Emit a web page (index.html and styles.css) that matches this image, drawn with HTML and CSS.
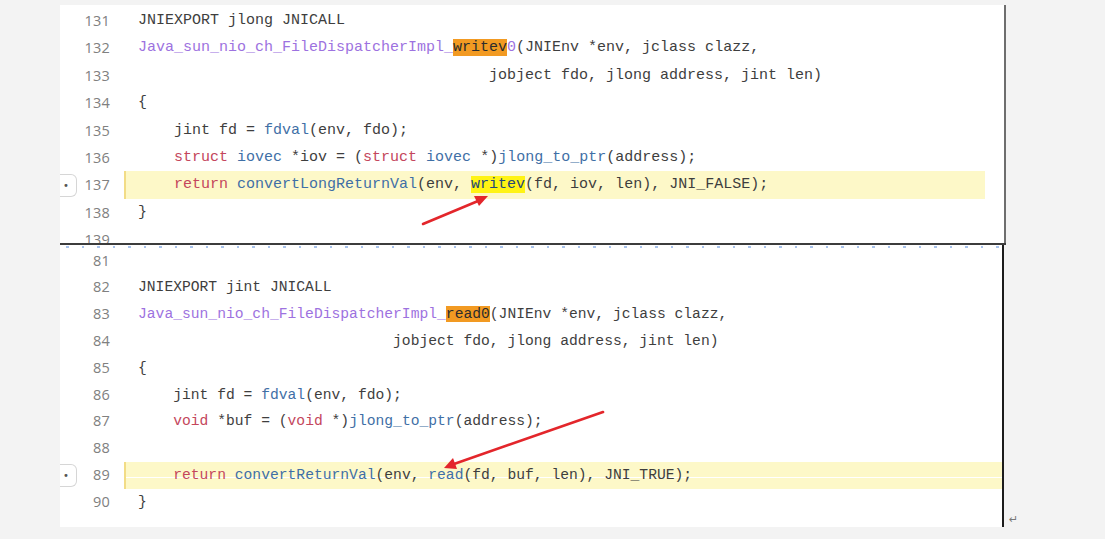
FILE: index.html
```html
<!DOCTYPE html>
<html>
<head>
<meta charset="utf-8">
<link rel="stylesheet" href="styles.css">
</head>
<body>
<div class="page">
  <div class="shot shot-top">
    <div class="row"><span class="gut"><span class="num">131</span></span><span class="code">JNIEXPORT jlong JNICALL</span></div>
    <div class="row"><span class="gut"><span class="num">132</span></span><span class="code"><span class="pu">Java_sun_nio_ch_FileDispatcherImpl_</span><span class="or">writev</span><span class="pu">0</span>(JNIEnv *env, jclass clazz,</span></div>
    <div class="row"><span class="gut"><span class="num">133</span></span><span class="code">                                       jobject fdo, jlong address, jint len)</span></div>
    <div class="row"><span class="gut"><span class="num">134</span></span><span class="code">{</span></div>
    <div class="row"><span class="gut"><span class="num">135</span></span><span class="code">    jint fd = <span class="bl">fdval</span>(env, fdo);</span></div>
    <div class="row"><span class="gut"><span class="num">136</span></span><span class="code">    <span class="kw">struct</span> <span class="bl">iovec</span> *iov = (<span class="kw">struct</span> <span class="bl">iovec</span> *)<span class="bl">jlong_to_ptr</span>(address);</span></div>
    <div class="row"><span class="gut"><span class="mark">•</span><span class="num">137</span></span><span class="code hl hl-top">    <span class="kw">return</span> <span class="bl">convertLongReturnVal</span>(env, <span class="ye">writev</span>(fd, iov, len), JNI_FALSE);</span></div>
    <div class="row"><span class="gut"><span class="num">138</span></span><span class="code">}</span></div>
    <div class="row"><span class="gut"><span class="num">139</span></span><span class="code"></span></div>
  </div>
  <div class="divider"></div>
  <div class="bottom-wrap">
    <div class="shot shot-bottom">
      <div class="row"><span class="gut"><span class="num">81</span></span><span class="code"></span></div>
      <div class="row"><span class="gut"><span class="num">82</span></span><span class="code">JNIEXPORT jint JNICALL</span></div>
      <div class="row"><span class="gut"><span class="num">83</span></span><span class="code"><span class="pu">Java_sun_nio_ch_FileDispatcherImpl_</span><span class="or">read0</span>(JNIEnv *env, jclass clazz,</span></div>
      <div class="row"><span class="gut"><span class="num">84</span></span><span class="code">                             jobject fdo, jlong address, jint len)</span></div>
      <div class="row"><span class="gut"><span class="num">85</span></span><span class="code">{</span></div>
      <div class="row"><span class="gut"><span class="num">86</span></span><span class="code">    jint fd = <span class="bl">fdval</span>(env, fdo);</span></div>
      <div class="row"><span class="gut"><span class="num">87</span></span><span class="code">    <span class="kw">void</span> *buf = (<span class="kw">void</span> *)<span class="bl">jlong_to_ptr</span>(address);</span></div>
      <div class="row"><span class="gut"><span class="num">88</span></span><span class="code"></span></div>
      <div class="row"><span class="gut"><span class="mark">•</span><span class="num">89</span></span><span class="code hl hl-bottom">    <span class="kw">return</span> <span class="bl">convertReturnVal</span>(env, <span class="bl">read</span>(fd, buf, len), JNI_TRUE);</span></div>
      <div class="row"><span class="gut"><span class="num">90</span></span><span class="code">}</span></div>
    </div>
    <span class="ret">↵</span>
  </div>
  <svg class="arrows" width="1105" height="539" viewBox="0 0 1105 539">
    <line x1="423" y1="224" x2="478" y2="201" stroke="#e3262b" stroke-width="2.6" stroke-linecap="round"/>
    <polygon points="488,196 474,196 479,206" fill="#e3262b"/>
    <line x1="603" y1="412" x2="454" y2="464" stroke="#e3262b" stroke-width="2.6" stroke-linecap="round"/>
    <polygon points="444,468 453,458 457,469" fill="#e3262b"/>
  </svg>
</div>
</body>
</html>
```
FILE: styles.css
```css
html, body {
  margin: 0;
  padding: 0;
}
body {
  background: #f3f3f3;
  width: 1105px;
  height: 539px;
  overflow: hidden;
}
.page {
  position: relative;
  padding: 5px 0 0 60px;
}
.shot {
  background: #ffffff;
  overflow: hidden;
}
.shot-top {
  width: 944px;
  height: 236px;
  padding-top: 2px;
  border-right: 2px solid #6e6e6e;
}
.shot-top .row {
  height: 27.4px;
  line-height: 27.4px;
  font-size: 15px;
}
.divider {
  width: 946px;
  height: 2px;
  background: #3c3c3c;
}
.bottom-wrap {
  display: flex;
  align-items: flex-end;
}
.shot-bottom {
  width: 942px;
  height: 279.4px;
  padding-top: 2.6px;
  border-right: 2px solid #1c1c1c;
  background-color: #fff;
  background-image: repeating-linear-gradient(90deg, transparent 0 6px, #a9c3ec 6px 9px, transparent 9px 22px, #a9c3ec 22px 24px, transparent 24px 31px);
  background-size: 100% 2px;
  background-position: 0 1px;
  background-repeat: no-repeat;
}
.shot-bottom .row {
  height: 26.8px;
  line-height: 26.8px;
  font-size: 14.67px;
}
.row {
  display: flex;
  align-items: stretch;
}
.gut {
  width: 64px;
  flex: none;
  display: flex;
  align-items: center;
  justify-content: flex-end;
  padding-right: 14px;
  box-sizing: border-box;
  position: relative;
}
.num {
  font-family: "Open Sans", "Noto Sans", sans-serif;
  font-size: 14.5px;
  color: #808080;
  letter-spacing: 0.2px;
}
.mark {
  position: absolute;
  left: 0;
  top: 50%;
  margin-top: -11px;
  width: 16px;
  height: 21px;
  border: 1px solid #d6d6d6;
  border-left: none;
  border-radius: 0 6px 6px 0;
  font-family: "DejaVu Sans", sans-serif;
  font-size: 10px;
  color: #555;
  line-height: 21px;
  text-indent: 3px;
  box-sizing: content-box;
}
.code {
  flex: 1;
  display: block;
  white-space: pre;
  font-family: "Liberation Mono", monospace;
  color: #3e3e3e;
  padding-left: 12px;
  border-left: 2px solid transparent;
}
.hl {
  background: #fdf8c8;
  border-left-color: #f2dc86;
}
.hl-top {
  margin-right: 19px;
}
.hl-bottom {
  background: linear-gradient(#fdf8c8 0 15px, #ffffff 15px 16px, #fdf8c8 16px);
}
.pu { color: #9d72e0; }
.bl { color: #3f6fa6; }
.kw { color: #c4465c; }
.or {
  background: #f29a22;
  color: #2c2c2c;
}
.ye {
  background: #fff314;
  color: #23467a;
}
.ret {
  font-family: "DejaVu Sans", sans-serif;
  font-size: 11px;
  color: #777;
  margin-left: 5px;
  line-height: 14px;
}
.arrows {
  position: absolute;
  left: 0;
  top: 0;
  pointer-events: none;
}
```
